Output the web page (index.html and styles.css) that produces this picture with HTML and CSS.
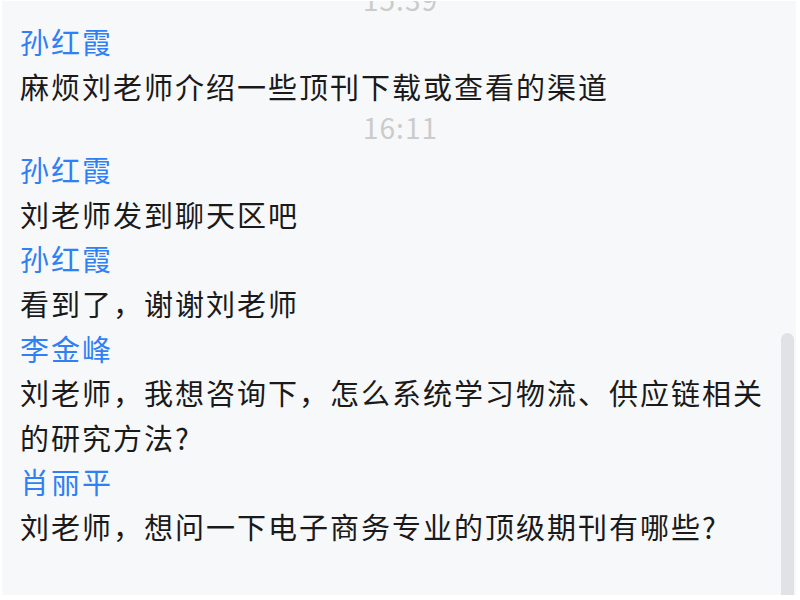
FILE: index.html
```html
<!DOCTYPE html>
<html lang="zh-CN">
<head>
    <meta charset="UTF-8">
    <meta name="viewport" content="width=device-width, initial-scale=1.0">
    <title>聊天区</title>
    <link rel="stylesheet" href="styles.css">
</head>
<body>
    <div class="chat-panel">
        <div class="chat-scroll">
            <ul class="chat-list">
                <li class="chat-time first">15:39</li>
                <li class="chat-item">
                    <div class="chat-name">孙红霞</div>
                    <div class="chat-text">麻烦刘老师介绍一些顶刊下载或查看的渠道</div>
                </li>
                <li class="chat-time">16:11</li>
                <li class="chat-item">
                    <div class="chat-name">孙红霞</div>
                    <div class="chat-text">刘老师发到聊天区吧</div>
                </li>
                <li class="chat-item">
                    <div class="chat-name">孙红霞</div>
                    <div class="chat-text">看到了，谢谢刘老师</div>
                </li>
                <li class="chat-item">
                    <div class="chat-name">李金峰</div>
                    <div class="chat-text">刘老师，我想咨询下，怎么系统学习物流、供应链相关的研究方法?</div>
                </li>
                <li class="chat-item">
                    <div class="chat-name">肖丽平</div>
                    <div class="chat-text">刘老师，想问一下电子商务专业的顶级期刊有哪些?</div>
                </li>
            </ul>
        </div>
        <div class="scroll-track">
            <div class="scroll-thumb"></div>
        </div>
    </div>
</body>
</html>
```

FILE: styles.css
```css
html, body {
    margin: 0;
    padding: 0;
    height: 100%;
    background-color: #fff;
    overflow: hidden;
}
body {
    font-family: "Noto Sans CJK SC", "Noto Sans", sans-serif;
}
.chat-panel {
    display: flex;
    height: 594px;
    margin: 1px 4px 5px 2px;
    background-color: #f7f8fa;
    overflow: hidden;
}
.chat-scroll {
    flex: 1;
    overflow: hidden;
    padding: 0 14px 0 18px;
}
.chat-list {
    list-style-type: none;
    margin: 0;
    padding: 0;
}
.chat-time {
    text-align: center;
    color: #cbcbcb;
    font-size: 28px;
    line-height: 39px;
    letter-spacing: 1px;
    padding-left: 14px;
}
.chat-time.first {
    margin-top: -21px;
}
.chat-name,
.chat-text {
    font-size: 29px;
    line-height: 44.6px;
    letter-spacing: 2px;
}
.chat-name {
    color: #2f7ff5;
}
.chat-text {
    color: #1a1a1a;
}
.scroll-track {
    width: 13px;
    padding-right: 2px;
    display: flex;
    flex-direction: column;
    justify-content: flex-end;
}
.scroll-thumb {
    height: 262px;
    background-color: #e1e2e6;
    border-radius: 7px 7px 0 0;
}
```
